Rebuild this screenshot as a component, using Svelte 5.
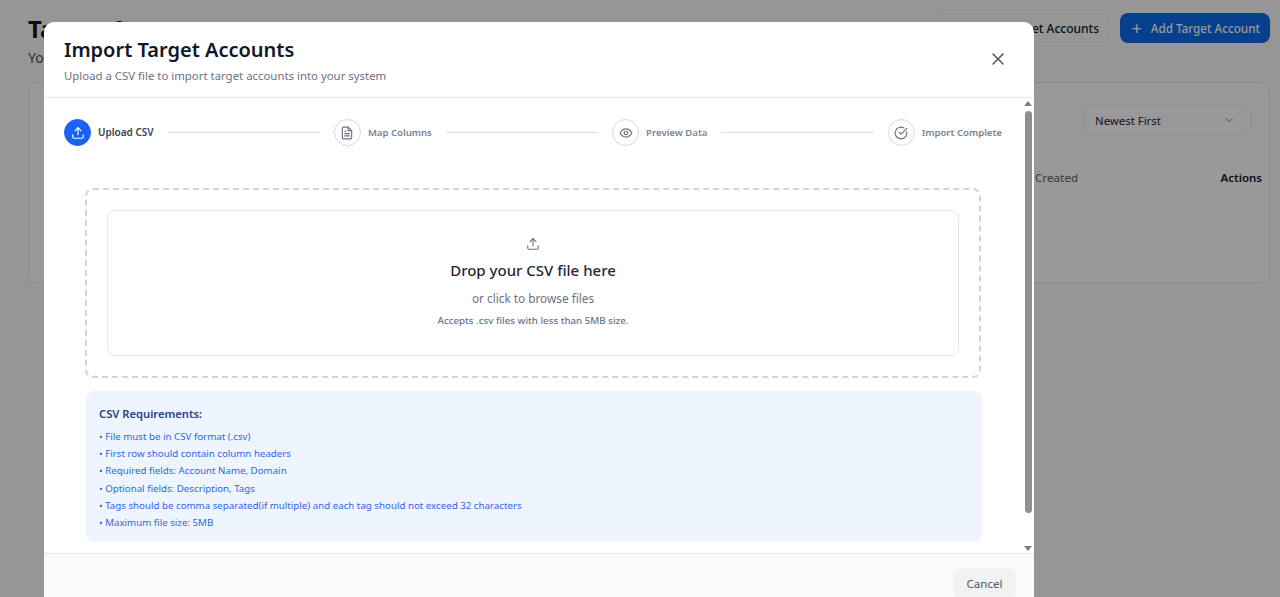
<script>
  const steps = [
    { label: 'Upload CSV', icon: 'upload', active: true },
    { label: 'Map Columns', icon: 'file' },
    { label: 'Preview Data', icon: 'eye' },
    { label: 'Import Complete', icon: 'check' }
  ];

  const requirements = [
    'File must be in CSV format (.csv)',
    'First row should contain column headers',
    'Required fields: Account Name, Domain',
    'Optional fields: Description, Tags',
    'Tags should be comma separated(if multiple) and each tag should not exceed 32 characters',
    'Maximum file size: 5MB'
  ];
</script>

{#snippet stepIcon(name)}
  <svg viewBox="0 0 24 24" width="14" height="14" fill="none" stroke="currentColor" stroke-width="2" stroke-linecap="round" stroke-linejoin="round">
    {#if name === 'upload'}
      <path d="M21 15v4a2 2 0 0 1-2 2H5a2 2 0 0 1-2-2v-4" /><path d="M17 8l-5-5-5 5" /><path d="M12 3v12" />
    {:else if name === 'file'}
      <path d="M14 2H6a2 2 0 0 0-2 2v16a2 2 0 0 0 2 2h12a2 2 0 0 0 2-2V8z" /><path d="M14 2v6h6" /><path d="M16 13H8" /><path d="M16 17H8" /><path d="M10 9H8" />
    {:else if name === 'eye'}
      <path d="M2 12s3.6-7 10-7 10 7 10 7-3.6 7-10 7-10-7-10-7z" /><circle cx="12" cy="12" r="3" />
    {:else}
      <path d="M21.8 10A10 10 0 1 1 17 3.3" /><path d="M9 11l3 3L22 4" />
    {/if}
  </svg>
{/snippet}

<div class="page">
  <header class="page-head">
    <div>
      <h1>Target Accounts</h1>
      <p>You can manage your target accounts here</p>
    </div>
    <div class="page-actions">
      <button class="ghost">Import Target Accounts</button>
      <button class="primary"><span class="plus">+</span> Add Target Account</button>
    </div>
  </header>

  <section class="table-card">
    <div class="filters">
      <div class="select">
        <span>Newest First</span>
        <svg viewBox="0 0 24 24" width="14" height="14" fill="none" stroke="currentColor" stroke-width="2"><path d="M6 9l6 6 6-6" /></svg>
      </div>
    </div>
    <div class="columns">
      <span class="created">Created</span>
      <span class="actions">Actions</span>
    </div>
  </section>

  <div class="overlay">
    <div class="modal">
      <div class="modal-head">
        <div>
          <h2>Import Target Accounts</h2>
          <p>Upload a CSV file to import target accounts into your system</p>
        </div>
        <button class="close" aria-label="Close">
          <svg viewBox="0 0 24 24" width="20" height="20" fill="none" stroke="currentColor" stroke-width="1.75" stroke-linecap="round"><path d="M18 6L6 18" /><path d="M6 6l12 12" /></svg>
        </button>
      </div>

      <div class="modal-body">
        <div class="scroll-content">
          <ol class="steps">
            {#each steps as step, i}
              {#if i > 0}<li class="line" aria-hidden="true"></li>{/if}
              <li class="step" class:active={step.active}>
                <span class="bubble">{@render stepIcon(step.icon)}</span>
                <span class="step-label">{step.label}</span>
              </li>
            {/each}
          </ol>

          <div class="dropzone">
            <div class="drop-inner">
              <svg class="drop-icon" viewBox="0 0 24 24" width="14" height="14" fill="none" stroke="currentColor" stroke-width="2" stroke-linecap="round" stroke-linejoin="round"><path d="M21 15v4a2 2 0 0 1-2 2H5a2 2 0 0 1-2-2v-4" /><path d="M17 8l-5-5-5 5" /><path d="M12 3v12" /></svg>
              <h3>Drop your CSV file here</h3>
              <p class="browse">or click to browse files</p>
              <p class="accepts">Accepts .csv files with less than 5MB size.</p>
            </div>
          </div>

          <div class="requirements">
            <h4>CSV Requirements:</h4>
            <ul>
              {#each requirements as item}
                <li>• {item}</li>
              {/each}
            </ul>
          </div>
        </div>

        <div class="scrollbar" aria-hidden="true">
          <span class="arrow up"></span>
          <span class="thumb"></span>
          <span class="arrow down"></span>
        </div>
      </div>

      <div class="modal-foot">
        <button class="cancel">Cancel</button>
      </div>
    </div>
  </div>
</div>

<style>
  :global(body) {
    margin: 0;
    font-family: "Noto Sans", "Open Sans", sans-serif;
    background: #fff;
  }

  h1, h2, h3, h4, p, ul, ol {
    margin: 0;
    padding: 0;
  }

  button {
    font-family: inherit;
    cursor: pointer;
  }

  .page {
    position: relative;
    height: 597px;
    overflow: hidden;
    padding: 13px 10px 0 28px;
    box-sizing: border-box;
    background: #fafafa;
  }

  .page-head {
    display: flex;
    justify-content: space-between;
    align-items: flex-start;
  }

  h1 {
    font-size: 24px;
    line-height: 32px;
    font-weight: 700;
    color: #111827;
  }

  .page-head p {
    font-size: 14px;
    line-height: 20px;
    margin-top: 3px;
    color: #4b5563;
  }

  .page-actions {
    display: flex;
    gap: 10px;
  }

  .page-actions button {
    height: 30px;
    border-radius: 8px;
    font-size: 12px;
    font-weight: 500;
    padding: 0 10px;
  }

  .page-actions .primary {
    font-size: 11.7px;
    text-align: right;
  }

  .ghost {
    width: 170px;
    text-align: right;
    background: #fafafa;
    border: 1px solid #eceef1;
    color: #111827;
  }

  .primary {
    background: #0a6ae8;
    border: none;
    color: #fff;
    width: 150px;
  }

  .plus {
    font-size: 18px;
    font-weight: 400;
    line-height: 1;
    vertical-align: -2px;
    margin-right: 6px;
  }

  .table-card {
    margin-top: 14px;
    height: 201px;
    border: 1px solid #e5e7eb;
    border-radius: 8px;
    box-sizing: border-box;
    background: #fff;
  }

  .filters {
    display: flex;
    justify-content: flex-end;
    padding: 22px 18px 0;
  }

  .select {
    width: 168px;
    height: 30px;
    box-sizing: border-box;
    padding: 0 14px 0 11px;
    display: flex;
    align-items: center;
    justify-content: space-between;
    border: 1px solid #f0f1f3;
    border-radius: 8px;
    font-size: 11.4px;
    color: #1f2937;
  }

  .select svg {
    color: #b6bbc4;
  }

  .columns {
    display: flex;
    justify-content: space-between;
    padding: 35px 7px 0 1006px;
    font-size: 11.5px;
    font-weight: 600;
  }

  .created {
    color: #6b7280;
    font-weight: 500;
  }

  .actions {
    color: #111827;
  }

  .overlay {
    position: absolute;
    inset: 0;
    background: rgba(0, 0, 0, 0.4);
  }

  .modal {
    position: absolute;
    left: 44px;
    top: 22px;
    width: 990px;
    height: 600px;
    display: flex;
    flex-direction: column;
    background: #fff;
    border-radius: 10px;
    overflow: hidden;
  }

  .modal-head {
    height: 76px;
    flex: none;
    box-sizing: border-box;
    padding: 14px 26px 0 20px;
    display: flex;
    justify-content: space-between;
    align-items: flex-start;
    border-bottom: 1px solid #e5e7eb;
  }

  h2 {
    font-size: 20px;
    line-height: 27px;
    font-weight: 600;
    color: #111827;
  }

  .modal-head p {
    margin-top: 4px;
    font-size: 11.4px;
    line-height: 18px;
    color: #6b7280;
  }

  .close {
    margin-top: 13px;
    padding: 0;
    border: none;
    background: none;
    color: #4b5563;
    display: flex;
  }

  .modal-body {
    height: 455px;
    flex: none;
    display: flex;
    overflow: hidden;
  }

  .scroll-content {
    flex: 1;
    min-width: 0;
    box-sizing: border-box;
    padding: 21px 21px 0 20px;
  }

  .steps {
    list-style: none;
    display: flex;
    align-items: center;
    gap: 14px;
  }

  .step {
    display: flex;
    align-items: center;
    gap: 7px;
    flex: none;
  }

  .bubble {
    width: 27px;
    height: 27px;
    box-sizing: border-box;
    border-radius: 50%;
    border: 1.5px solid #d4d7dc;
    color: #6b7280;
    display: flex;
    align-items: center;
    justify-content: center;
  }

  .step.active .bubble {
    background: #1a62f5;
    border-color: #1a62f5;
    color: #fff;
  }

  .step-label {
    font-size: 9.6px;
    line-height: 13px;
    font-weight: 600;
    color: #7b8290;
    white-space: nowrap;
  }

  .step.active .step-label {
    font-size: 10px;
    color: #374151;
  }

  .line {
    flex: 1;
    height: 1px;
    background: #d9dce1;
  }

  .dropzone {
    margin: 42px 21px 0 21px;
    height: 190px;
    box-sizing: border-box;
    padding: 20px;
    border: 2px dashed #d1d5db;
    border-radius: 8px;
  }

  .drop-inner {
    height: 100%;
    box-sizing: border-box;
    padding-top: 26px;
    border: 1px solid #e5e7eb;
    border-radius: 8px;
    display: flex;
    flex-direction: column;
    align-items: center;
  }

  .drop-icon {
    color: #6b7280;
    flex: none;
  }

  h3 {
    margin-top: 8px;
    font-size: 15px;
    line-height: 22px;
    font-weight: 500;
    color: #1f2937;
  }

  .browse {
    margin-top: 8px;
    font-size: 11.8px;
    line-height: 18px;
    color: #6b7280;
  }

  .accepts {
    margin-top: 7px;
    font-size: 9.75px;
    line-height: 14px;
    font-weight: 500;
    color: #6b7280;
  }

  .requirements {
    margin: 13px 20px 0 22px;
    height: 151px;
    box-sizing: border-box;
    padding: 14px 13px 0;
    background: #eff5ff;
    border-radius: 8px;
  }

  h4 {
    font-size: 11.2px;
    line-height: 18px;
    font-weight: 600;
    color: #27408f;
  }

  .requirements ul {
    list-style: none;
    margin-top: 5px;
    font-size: 9.73px;
    line-height: 17.2px;
    color: #2f65e6;
  }

  .scrollbar {
    width: 10px;
    flex: none;
    margin-right: 1px;
    padding: 3px 0 2px;
    box-sizing: border-box;
    display: flex;
    flex-direction: column;
    align-items: center;
    gap: 5px;
  }

  .thumb {
    flex: 1;
    width: 7px;
    border-radius: 4px;
    background: #8f8f8f;
    margin-bottom: 28px;
  }

  .arrow {
    width: 0;
    height: 0;
    border-left: 4px solid transparent;
    border-right: 4px solid transparent;
    flex: none;
  }

  .arrow.up {
    border-bottom: 5px solid #7f7f7f;
  }

  .arrow.down {
    border-top: 5px solid #7f7f7f;
  }

  .modal-foot {
    flex: 1;
    display: flex;
    justify-content: flex-end;
    padding: 14px 18px 0 0;
    background: #fafafa;
    border-top: 1px solid #e5e7eb;
  }

  .cancel {
    width: 63px;
    height: 30px;
    border: none;
    border-radius: 8px;
    background: #f1f2f4;
    font-size: 11.5px;
    color: #4b5563;
  }
</style>
